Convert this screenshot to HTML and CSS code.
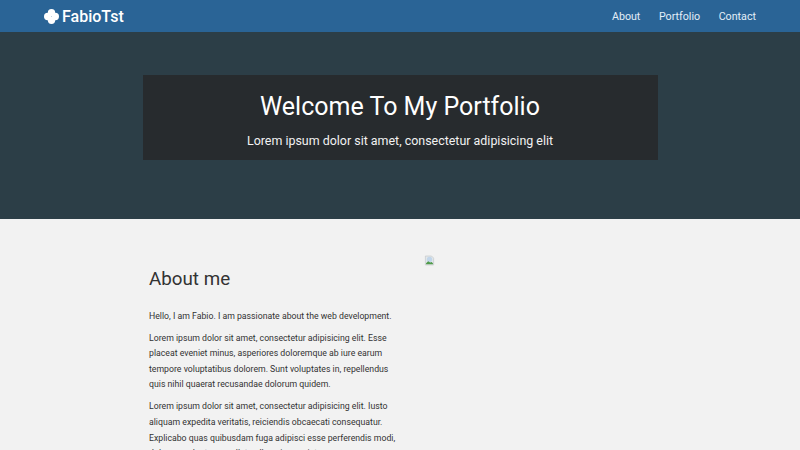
FILE: index.html
```html
<!DOCTYPE html>
<html lang="en">
<head>
  <meta charset="UTF-8" />
  <title>FabioTst</title>
  <link rel="stylesheet" href="styles.css">
</head>
<body>
  <nav class="navbar">
    <a class="brand" href="#">
      <svg class="brand-icon" viewBox="0 0 16 16" width="15" height="15" aria-hidden="true">
        <circle cx="8" cy="3.9" r="3.9" />
        <circle cx="8" cy="12.1" r="3.9" />
        <circle cx="3.9" cy="8" r="3.9" />
        <circle cx="12.1" cy="8" r="3.9" />
      </svg>
      FabioTst
    </a>
    <ul class="nav-links">
      <li><a href="#">About</a></li>
      <li><a href="#">Portfolio</a></li>
      <li><a href="#">Contact</a></li>
    </ul>
  </nav>

  <header class="hero">
    <div class="hero-box">
      <h1>Welcome To My Portfolio</h1>
      <p>Lorem ipsum dolor sit amet, consectetur adipisicing elit</p>
    </div>
  </header>

  <main class="about">
    <div class="about-text">
      <h2>About me</h2>
      <p>Hello, I am Fabio. I am passionate about the web development.</p>
      <p>Lorem ipsum dolor sit amet, consectetur adipisicing elit. Esse placeat eveniet minus, asperiores doloremque ab iure earum tempore voluptatibus dolorem. Sunt voluptates in, repellendus quis nihil quaerat recusandae dolorum quidem.</p>
      <p>Lorem ipsum dolor sit amet, consectetur adipisicing elit. Iusto aliquam expedita veritatis, reiciendis obcaecati consequatur. Explicabo quas quibusdam fuga adipisci esse perferendis modi, dolorum voluptas repellat nulla quia eveniet.</p>
    </div>
    <div class="about-image">
      <svg class="broken-img" viewBox="0 0 16 16" width="11" height="11" aria-hidden="true">
        <path d="M2 1.5h9l3 3v10H2z" fill="#e4e8ea" stroke="#c3c7ca" />
        <circle cx="8" cy="6.5" r="4" fill="#c2d6ea" />
        <path d="M3 12l3-3 3 2 2-1 2 2v1.5H3z" fill="#4f9a4a" />
      </svg>
    </div>
  </main>
</body>
</html>
```

FILE: styles.css
```css
* { box-sizing: border-box; }
html, body { height: 450px; overflow: hidden; }
body { margin: 0; font-family: Roboto, sans-serif; background: #f2f2f2; color: #333; }

.navbar { height: 32px; background: #2a6496; display: flex; align-items: center; justify-content: space-between; padding: 0 44px; }
.brand { display: flex; align-items: center; gap: 3px; color: #fff; font-size: 16px; font-weight: 500; text-decoration: none; }
.brand-icon { fill: #fff; }
.nav-links { display: flex; gap: 18.5px; list-style: none; margin: 0; padding: 0 0 3px; }
.nav-links a { color: #e3eef8; font-size: 10.7px; text-decoration: none; }

.hero { height: 187px; background: #2c3e47; padding-top: 43px; }
.hero-box { width: 515px; height: 85px; margin: 0 auto; padding-top: 16px; background: #272b2e; color: #fff; text-align: center; }
.hero-box h1 { margin: 0; font-size: 25px; font-weight: 400; line-height: 32px; }
.hero-box p { margin: 8px 0 0; font-size: 12.45px; line-height: 20px; color: #f2f2f2; }

.about { display: flex; width: 502px; margin: 0 auto; padding-top: 36px; }
.about-text { width: 250px; flex: none; }
.about-text h2 { margin: 11px 0 16.5px; font-size: 18.8px; font-weight: 400; line-height: 26px; }
.about-text p { margin: 0 0 6.5px; font-size: 8.73px; line-height: 15.6px; }
.about-image { margin-left: 25px; }
.broken-img { display: block; }
```
